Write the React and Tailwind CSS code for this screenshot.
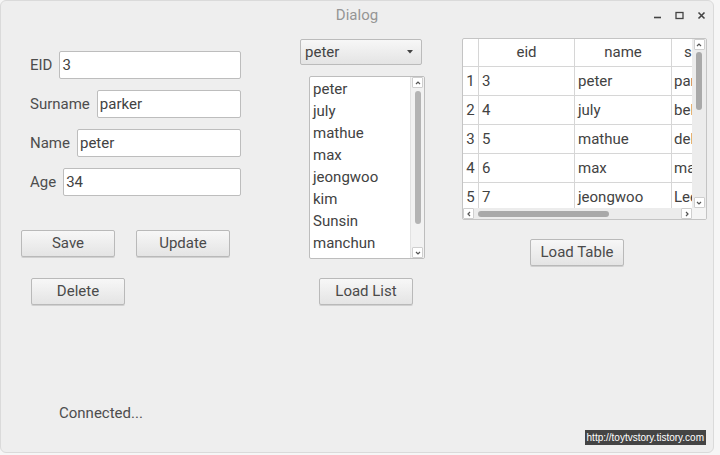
import { useState } from 'react'

const font = { fontFamily: 'Roboto, "Noto Sans", sans-serif' }

function Btn({ children, className = '' }) {
  return (
    <button
      type="button"
      className={`h-[27px] w-[94px] rounded-[2px] border border-[#b9b9b9] bg-[linear-gradient(#f7f7f7,#e4e4e4)] text-[15px] text-[#4a4a4a] shadow-[0_1px_0_#d0d0d0] ${className}`}
    >
      {children}
    </button>
  )
}

function Field({ label, value }) {
  return (
    <div className="flex h-[28px] items-center">
      <span className="mr-[7px] text-[15px] text-[#4d4d4d]">{label}</span>
      <input
        readOnly
        value={value}
        className="h-[28px] min-w-0 flex-1 rounded-[2px] border border-[#bdbdbd] bg-white px-[2px] text-[15px] text-[#424242] outline-none"
      />
    </div>
  )
}

function Chevron({ dir = 'down' }) {
  const d = {
    up: 'M2 5 L4 3 L6 5',
    down: 'M2 3 L4 5 L6 3',
    left: 'M5 2 L3 4 L5 6',
    right: 'M3 2 L5 4 L3 6',
  }[dir]
  return (
    <svg width="8" height="8" viewBox="0 0 8 8">
      <path d={d} fill="none" stroke="#555" strokeWidth="1.2" />
    </svg>
  )
}

function ArrowBox({ dir, className = '' }) {
  return (
    <div className={`flex h-[11px] w-[11px] items-center justify-center rounded-[1px] border border-[#cfcfcf] bg-white ${className}`}>
      <Chevron dir={dir} />
    </div>
  )
}

const names = ['peter', 'july', 'mathue', 'max', 'jeongwoo', 'kim', 'Sunsin', 'manchun', 'dukhwa']

const rows = [
  ['1', '3', 'peter', 'parker'],
  ['2', '4', 'july', 'bell'],
  ['3', '5', 'mathue', 'del'],
  ['4', '6', 'max', 'max'],
  ['5', '7', 'jeongwoo', 'Lee'],
]

export default function App() {
  const [selected] = useState('peter')

  return (
    <div className="flex h-[455px] w-[720px] bg-[#f6f6f6]" style={font}>
      <div className="relative flex h-[453px] w-[714px] flex-col rounded-[6px] border border-[#dadada] bg-[#eeeeee]">
        {/* title bar */}
        <div className="flex h-[29px] items-center justify-between">
          <div className="w-[62px]" />
          <span className="text-[15px] text-[#959595]">Dialog</span>
          <div className="flex w-[62px] items-center gap-[13px] pl-[2px] text-[#444]">
            <svg width="9" height="9" viewBox="0 0 9 9"><path d="M1 6.5 H8" stroke="#444" strokeWidth="1.6" /></svg>
            <svg width="9" height="9" viewBox="0 0 9 9"><rect x="1" y="1.5" width="7" height="6" fill="none" stroke="#444" strokeWidth="1.3" /></svg>
            <svg width="9" height="9" viewBox="0 0 9 9"><path d="M1.5 1.5 L7.5 7.5 M7.5 1.5 L1.5 7.5" stroke="#444" strokeWidth="1.6" /></svg>
          </div>
        </div>

        <div className="flex">
          {/* left column */}
          <div className="ml-[20px] flex w-[220px] flex-col">
            <div className="ml-[9px] mt-[21px] flex flex-col gap-[11px]">
              <Field label="EID" value="3" />
              <Field label="Surname" value="parker" />
              <Field label="Name" value="peter" />
              <Field label="Age" value="34" />
            </div>
            <div className="mt-[34px] flex gap-[21px]">
              <Btn>Save</Btn>
              <Btn>Update</Btn>
            </div>
            <Btn className="ml-[10px] mt-[21px]">Delete</Btn>
            <span className="ml-[38px] mt-[97px] text-[15px] text-[#4d4d4d]">Connected...</span>
          </div>

          {/* middle column */}
          <div className="ml-[59px] flex w-[125px] flex-col">
            <div className="mt-[9px] flex h-[26px] w-[122px] items-center justify-between rounded-[2px] border border-[#bbbbbb] bg-[linear-gradient(#f7f7f7,#e4e4e4)] pl-[4px] pr-[8px] text-[15px] text-[#444]">
              <span>{selected}</span>
              <svg width="6" height="4" viewBox="0 0 6 4"><path d="M0 0 H6 L3 3.5 Z" fill="#444" /></svg>
            </div>
            <div className="ml-[9px] mt-[11px] flex h-[183px] w-[116px] overflow-hidden rounded-[2px] border border-[#bdbdbd] bg-white">
              <div className="flex-1 overflow-hidden pl-[3px] pt-[1px] text-[15px] leading-[22px] text-[#424242]">
                {names.map((n) => (
                  <div key={n}>{n}</div>
                ))}
              </div>
              <div className="flex w-[14px] flex-col items-center border-l border-[#e2e2e2] bg-[#f2f2f2]">
                <ArrowBox dir="up" />
                <div className="mt-[3px] h-[133px] w-[6px] rounded-full bg-[#b4b4b4]" />
                <div className="flex-1" />
                <ArrowBox dir="down" />
              </div>
            </div>
            <Btn className="ml-[19px] mt-[19px]">Load List</Btn>
          </div>

          {/* right column */}
          <div className="ml-[37px] flex w-[245px] flex-col">
            <div className="mt-[8px] flex h-[182px] flex-col overflow-hidden rounded-[2px] border border-[#c4c4c4] bg-white text-[15px] text-[#424242]">
              <div className="flex min-h-0 flex-1">
                <div className="flex-1 overflow-hidden">
                  <div className="flex h-[28px] border-b border-[#d6d6d6]">
                    <div className="w-[16px] shrink-0 border-r border-[#d6d6d6]" />
                    <div className="flex w-[96px] shrink-0 items-center justify-center border-r border-[#d6d6d6]">eid</div>
                    <div className="flex w-[97px] shrink-0 items-center justify-center border-r border-[#d6d6d6]">name</div>
                    <div className="flex w-[70px] shrink-0 items-center pl-[12px]">surname</div>
                  </div>
                  {rows.map((r) => (
                    <div key={r[0]} className="flex h-[29px] border-b border-[#d6d6d6]">
                      <div className="flex w-[16px] shrink-0 items-center justify-center border-r border-[#d6d6d6]">{r[0]}</div>
                      <div className="flex w-[96px] shrink-0 items-center border-r border-[#d6d6d6] pl-[3px]">{r[1]}</div>
                      <div className="flex w-[97px] shrink-0 items-center border-r border-[#d6d6d6] pl-[3px]">{r[2]}</div>
                      <div className="flex w-[70px] shrink-0 items-center pl-[2px]">{r[3]}</div>
                    </div>
                  ))}
                </div>
                <div className="flex w-[14px] flex-col items-center bg-[#ececec]">
                  <ArrowBox dir="up" />
                  <div className="mt-[2px] h-[58px] w-[6px] rounded-full bg-[#a9a9a9]" />
                  <div className="flex-1" />
                  <ArrowBox dir="down" />
                </div>
              </div>
              <div className="flex h-[11px] items-center bg-[#ececec]">
                <ArrowBox dir="left" className="h-[10px] w-[10px]" />
                <div className="ml-[4px] h-[6px] w-[131px] rounded-full bg-[#a9a9a9]" />
                <div className="flex-1" />
                <ArrowBox dir="right" className="h-[10px] w-[10px]" />
                <div className="h-[11px] w-[14px] bg-[#f4f4f4]" />
              </div>
            </div>
            <Btn className="ml-[68px] mt-[19px]">Load Table</Btn>
          </div>
        </div>

        <div
          className="absolute bottom-[7px] right-[7px] bg-[#444444] px-[2px] text-[10px] leading-[15px] text-white"
          style={{ fontFamily: '"Liberation Sans", Arial, sans-serif' }}
        >
          http://toytvstory.tistory.com
        </div>
      </div>
    </div>
  )
}
